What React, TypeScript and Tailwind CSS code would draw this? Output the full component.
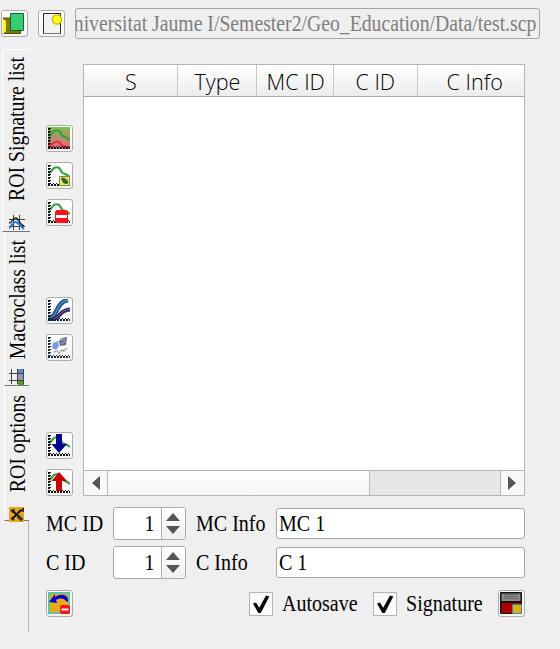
import type { ReactNode } from "react";

const SERIF = "font-['Liberation_Serif',serif] text-[23px] leading-[26px] whitespace-pre";

function Label({ children, className = "" }: { children: ReactNode; className?: string }) {
  return (
    <span className={`${SERIF} block origin-left scale-x-[0.87] ${className}`}>{children}</span>
  );
}

function IconButton({ children, className = "" }: { children: ReactNode; className?: string }) {
  return (
    <button
      className={`flex h-[27px] w-[27px] shrink-0 items-start justify-start rounded-[3px] border border-[#ababab] bg-gradient-to-b from-white to-[#f4f4f4] pt-px pl-px ${className}`}
    >
      <svg viewBox="0 0 22 22" className="h-[22px] w-[22px] shrink-0">
        {children}
      </svg>
    </button>
  );
}

function Axes({ color = "#111" }: { color?: string }) {
  return (
    <g stroke={color} fill="none">
      <path d="M1 1V22" strokeWidth="2" strokeDasharray="2 1" />
      <path d="M2.5 1V20" strokeWidth="1" strokeDasharray="1 2" />
      <path d="M0 21H22" strokeWidth="2" strokeDasharray="2 1" />
      <path d="M2 19.5H22" strokeWidth="1" strokeDasharray="1 2" />
    </g>
  );
}

function GreenCurve() {
  return (
    <path
      d="M1 9.5C4 7.5 4.5 4.5 7 3.5C11 2.5 12 4.5 14 8.5C16 10 19 10.5 22 13"
      fill="none"
      stroke="#35a040"
      strokeWidth="2.1"
    />
  );
}

function VerticalTab({
  label,
  icon,
  className = "",
  iconClass = "",
}: {
  label: string;
  icon: ReactNode;
  className?: string;
  iconClass?: string;
}) {
  return (
    <div className={`flex shrink-0 flex-col items-start border-b border-[#777] ${className}`}>
      <div className="flex min-h-0 flex-1 items-start">
        <span
          className={`${SERIF} block origin-top scale-y-[0.86] [writing-mode:vertical-rl]`}
        >
          <span className="block rotate-180">{label}</span>
        </span>
      </div>
      <svg viewBox="0 0 16 16" className={`h-4 w-4 shrink-0 ${iconClass}`}>
        {icon}
      </svg>
    </div>
  );
}

function SpinBox() {
  return (
    <div className="flex h-[33px] w-[73px] shrink-0 overflow-hidden rounded-[3px] border border-[#a9a9a9] bg-white">
      <div className="flex flex-1 items-center justify-end pr-[7px]">
        <span className={`${SERIF} block origin-right scale-x-[0.86]`}>1</span>
      </div>
      <div className="flex w-6 flex-col items-center justify-center gap-[5px] border-l border-[#b0b0b0] bg-gradient-to-b from-white to-[#f0f0f0] pr-px">
        <svg viewBox="0 0 14 8" className="h-2 w-3.5">
          <path d="M0 8L7 0L14 8Z" fill="#555" />
        </svg>
        <svg viewBox="0 0 14 8" className="h-2 w-3.5">
          <path d="M0 0H14L7 8Z" fill="#555" />
        </svg>
      </div>
    </div>
  );
}

function TextField({ value }: { value: string }) {
  return (
    <div className="flex h-[31px] w-[249px] items-center rounded-[3px] border border-[#a6a6a6] bg-white pl-[2px]">
      <Label>{value}</Label>
    </div>
  );
}

function CheckBox() {
  return (
    <div className="h-6 w-6 shrink-0 border border-[#b4b4b4] bg-gradient-to-b from-[#f8f8f8] to-white">
      <svg viewBox="0 0 22 22" className="h-[22px] w-[22px]">
        <path d="M3 10.6L6 9.6L9.2 14.8L16 2.4L19.3 3.6L10.8 20H8.3Z" fill="#050505" />
      </svg>
    </div>
  );
}

const columns = [
  { title: "S", width: "w-[94px]", pad: "pl-[1px]" },
  { title: "Type", width: "w-[79px]", pad: "" },
  { title: "MC ID", width: "w-[77px]", pad: "pl-[1px]" },
  { title: "C ID", width: "w-[84px]", pad: "" },
  { title: "C Info", width: "w-[107px]", pad: "pl-[7px]" },
];

export default function App() {
  return (
    <div className="h-[649px] w-[560px] overflow-hidden bg-[#efefef] text-black">
      <div className="flex h-[49px] items-start pl-[1px]">
        <IconButton className="mt-[10px]">
          <path d="M0 6H17.5V21.5H0Z" fill="#807900" stroke="#535000" />
          <path d="M0 7L3 9V19L0 22Z" fill="#ffff00" />
          <path d="M7.5 1.5H20.5V18.5H7.5Z" fill="#37cc73" stroke="#126635" />
        </IconButton>
        <IconButton className="mt-[10px] ml-[10px]">
          <path d="M3.5 1.5H20.5V21.5H3.5Z" fill="#f2f2f2" stroke="#777" />
          <path d="M3.5 21.5V1.5H20.5V21.5" fill="none" stroke="#2b2b2b" />
          <circle cx="17" cy="7.5" r="4.6" fill="#ffff12" stroke="#c7b500" strokeWidth="1.4" />
        </IconButton>
        <div className="mt-[8px] ml-[10px] flex h-[31px] w-[465px] items-center justify-end overflow-hidden rounded-[3px] border border-[#a6a6a6] pr-[3px] text-[#7f7f7f]">
          <span className={`${SERIF} block shrink-0 origin-right scale-x-[0.857]`}>
            Universitat Jaume I/Semester2/Geo_Education/Data/test.scp
          </span>
        </div>
      </div>

      <div className="flex">
        <div className="flex w-[32px] shrink-0 flex-col pl-[2px]">
          <VerticalTab
            label="ROI Signature list"
            className="h-[183px] w-[28px] rounded-tl-[3px] border-t border-l border-t-white border-l-white pt-[7px] pl-[1px]"
            iconClass="ml-[5px]"
            icon={
              <>
                <path d="M0 4.5H16M0 11.5H16M4.5 0V15M10.5 0V15" stroke="#444" strokeWidth="1" />
                <path d="M0 8C4 8 3 2 7 3C10 4 10 9 15 11" fill="none" stroke="#222" strokeWidth="1.4" />
                <path d="M0 13C4 11 3 6 7 7C10 8 11 11 15 14" fill="none" stroke="#2377d0" strokeWidth="2" />
              </>
            }
          />
          <VerticalTab
            label="Macroclass list"
            className="ml-[2px] h-[154px] w-[25px] border-l border-l-white pt-[8px]"
            iconClass="ml-[4px]"
            icon={
              <>
                <path d="M9 0H15V5H9Z" fill="#5b87d5" />
                <path d="M9 5H15V11H9Z" fill="#9a94b4" />
                <path d="M9 11H15V16H9Z" fill="#4a9e26" />
                <path d="M0 4.5H15M0 11.5H15M2.5 0V15M8.5 0V15M14.5 0V15" stroke="#444" />
              </>
            }
          />
          <VerticalTab
            label="ROI options"
            className="ml-[2px] h-[135px] w-[25px] border-l border-l-white pt-[9px]"
            iconClass="ml-[4px] -mb-[2px]"
            icon={
              <>
                <path d="M0 1H15V16H0Z" fill="#eaa51d" />
                <path d="M3 4L13 14M12 4L3 13" stroke="#171717" strokeWidth="2" />
                <path d="M2 4L4 6L5 3M11 4L14 5L14 2M2 12L5 14" stroke="#171717" strokeWidth="1.6" fill="none" />
                <path d="M9 10L13 14" stroke="#333" strokeWidth="3.2" />
              </>
            }
          />
          <div className="ml-[26px] h-[111px] w-px bg-[#b5b5b5]" />
        </div>

        <div className="ml-[14px] pt-[15px]">
          <div className="flex">
            <div className="flex w-[37px] shrink-0 flex-col pt-[61px]">
              <IconButton>
                <defs>
                  <linearGradient id="plot-background" x2="0.1" y2="1">
                    <stop offset="0" stopColor="#72c948" />
                    <stop offset="0.5" stopColor="#b0936a" />
                    <stop offset="1" stopColor="#e96c7a" />
                  </linearGradient>
                </defs>
                <path d="M0 0H22V22H0Z" fill="url(#plot-background)" />
                <GreenCurve />
                <path d="M1 20C5 18 5 14.5 9 14.5C13 14.5 12 19 16 19L22 21" fill="none" stroke="#ed273c" strokeWidth="2.2" />
                <Axes />
              </IconButton>
              <IconButton className="mt-[10px]">
                <GreenCurve />
                <Axes />
                <path d="M11.5 12.5H21.5V21.5H11.5Z" fill="#ece36a" stroke="#8f8936" />
                <path d="M13 15C14 12 18 14 20 17C21 20 18 21 15 19Z" fill="#3f7440" />
                <path d="M14 14.5L19 19.5" stroke="#173b29" />
              </IconButton>
              <IconButton className="mt-[10px]">
                <GreenCurve />
                <Axes />
                <rect x="7" y="9" width="13" height="13" rx="2.5" fill="#fb0f18" />
                <path d="M8 15.5H19" stroke="#fff" strokeWidth="3" />
              </IconButton>
              <IconButton className="mt-[71px]">
                <path d="M1 20C10 17 8 3 20 1" fill="none" stroke="#205890" strokeWidth="4.6" />
                <path d="M1 20C10 17 8 3 20 1" fill="none" stroke="#6ca6cb" strokeWidth="1" />
                <path d="M3 21C12 20 11 11 22 10.5" fill="none" stroke="#372565" strokeWidth="4" />
                <path d="M3 21C12 20 11 11 22 10.5" fill="none" stroke="#8b78ae" strokeWidth="0.8" />
                <Axes color="#091d31" />
              </IconButton>
              <IconButton className="mt-[10px]">
                <path d="M5 7L10 5L11 10L8 14L4 12Z" fill="#8098dc" />
                <path d="M14 2L19 1L18 9L12 10L11 5Z" fill="#626785" />
                <path d="M13 4L17 3M13 8L18 5" stroke="#a0a2be" strokeWidth="1.4" />
                <path d="M6 16L9 15L11 17L14 14L16 15L19 12" stroke="#8f909a" strokeWidth="1.5" strokeDasharray="2 0.7" fill="none" />
                <Axes color="#163047" />
              </IconButton>
              <IconButton className="mt-[71px]">
                <GreenCurve />
                <Axes />
                <path d="M8 0H14V10H19L11 19L3.5 10H8Z" fill="#00008b" />
              </IconButton>
              <IconButton className="mt-[10px]">
                <GreenCurve />
                <Axes />
                <path d="M8 20H14V10H19L11 1L3.5 10H8Z" fill="#c90000" />
              </IconButton>
            </div>

            <div className="flex h-[432px] w-[442px] flex-col border border-[#b4b4b4] bg-white">
              <div className="flex h-[32px] shrink-0 border-b border-[#a9a9a9] bg-gradient-to-b from-white to-[#ececec]">
                {columns.map((column, index) => (
                  <div
                    key={column.title}
                    className={`flex shrink-0 items-center justify-center ${index < 4 ? "border-r border-[#c8c8c8]" : ""} ${column.width} ${column.pad}`}
                  >
                    <span className="block scale-x-[0.98] font-['Open_Sans',sans-serif] text-[22px] leading-[28px] font-light whitespace-nowrap">
                      {column.title}
                    </span>
                  </div>
                ))}
              </div>
              <div className="flex-1" />
              <div className="flex h-[25px] shrink-0 border-t border-[#b4b4b4] bg-[#e6e6e6]">
                <div className="flex w-6 items-center justify-center border-r border-[#b9b9b9] bg-[#f8f8f8]">
                  <svg viewBox="0 0 8 14" className="h-3.5 w-2">
                    <path d="M8 0V14L0 7Z" fill="#555" />
                  </svg>
                </div>
                <div className="w-[262px] border-r border-[#b9b9b9] bg-gradient-to-b from-white to-[#f5f5f5]" />
                <div className="flex-1" />
                <div className="flex w-6 items-center justify-center border-l border-[#b9b9b9] bg-[#f8f8f8] pr-[2px]">
                  <svg viewBox="0 0 8 14" className="h-3.5 w-2">
                    <path d="M0 0V14L8 7Z" fill="#555" />
                  </svg>
                </div>
              </div>
            </div>
          </div>

          <div className="mt-[11px] flex flex-col gap-[6px]">
            {["MC", "C"].map((kind) => (
              <div key={kind} className="flex h-[33px] items-center">
                <div className="w-[67px]">
                  <Label>{`${kind} ID`}</Label>
                </div>
                <SpinBox />
                <div className="ml-[10px] w-[80px]">
                  <Label>{`${kind} Info`}</Label>
                </div>
                <TextField value={`${kind} 1`} />
              </div>
            ))}
          </div>

          <div className="mt-[11px] flex h-[27px] items-center">
            <IconButton>
              <path d="M0.7 0.7H21.3V21.3H0.7Z" fill="#e7aa18" stroke="#32cbd6" strokeWidth="1.4" />
              <path d="M1 10L7 2V5C13 1 21 2 20 10L18 9C15 6 12 6 8 8L9 11Z" fill="#0000dd" />
              <rect x="12" y="13" width="10" height="9" rx="2" fill="#ff1218" />
              <path d="M13.5 17.5H20.5" stroke="#fff" strokeWidth="2" />
            </IconButton>
            <div className="ml-[176px]">
              <CheckBox />
            </div>
            <div className="ml-[9px] w-[91px]">
              <Label>Autosave</Label>
            </div>
            <CheckBox />
            <div className="ml-[9px] w-[92px]">
              <Label>Signature</Label>
            </div>
            <IconButton>
              <rect x="0" y="0" width="22" height="22" rx="1" fill="#111" />
              <path d="M1.5 1.5H20.5V9H1.5Z" fill="#8d8d8d" />
              <path d="M4 2.5H18M4 4.5H18M4 6.5H18" stroke="#666" />
              <path d="M1.5 11H20.5V21H1.5Z" fill="#ab0000" />
              <path d="M12.5 12.5H21.5V21.5H12.5Z" fill="#e5aa18" stroke="#359095" />
            </IconButton>
          </div>
        </div>
      </div>
    </div>
  );
}
